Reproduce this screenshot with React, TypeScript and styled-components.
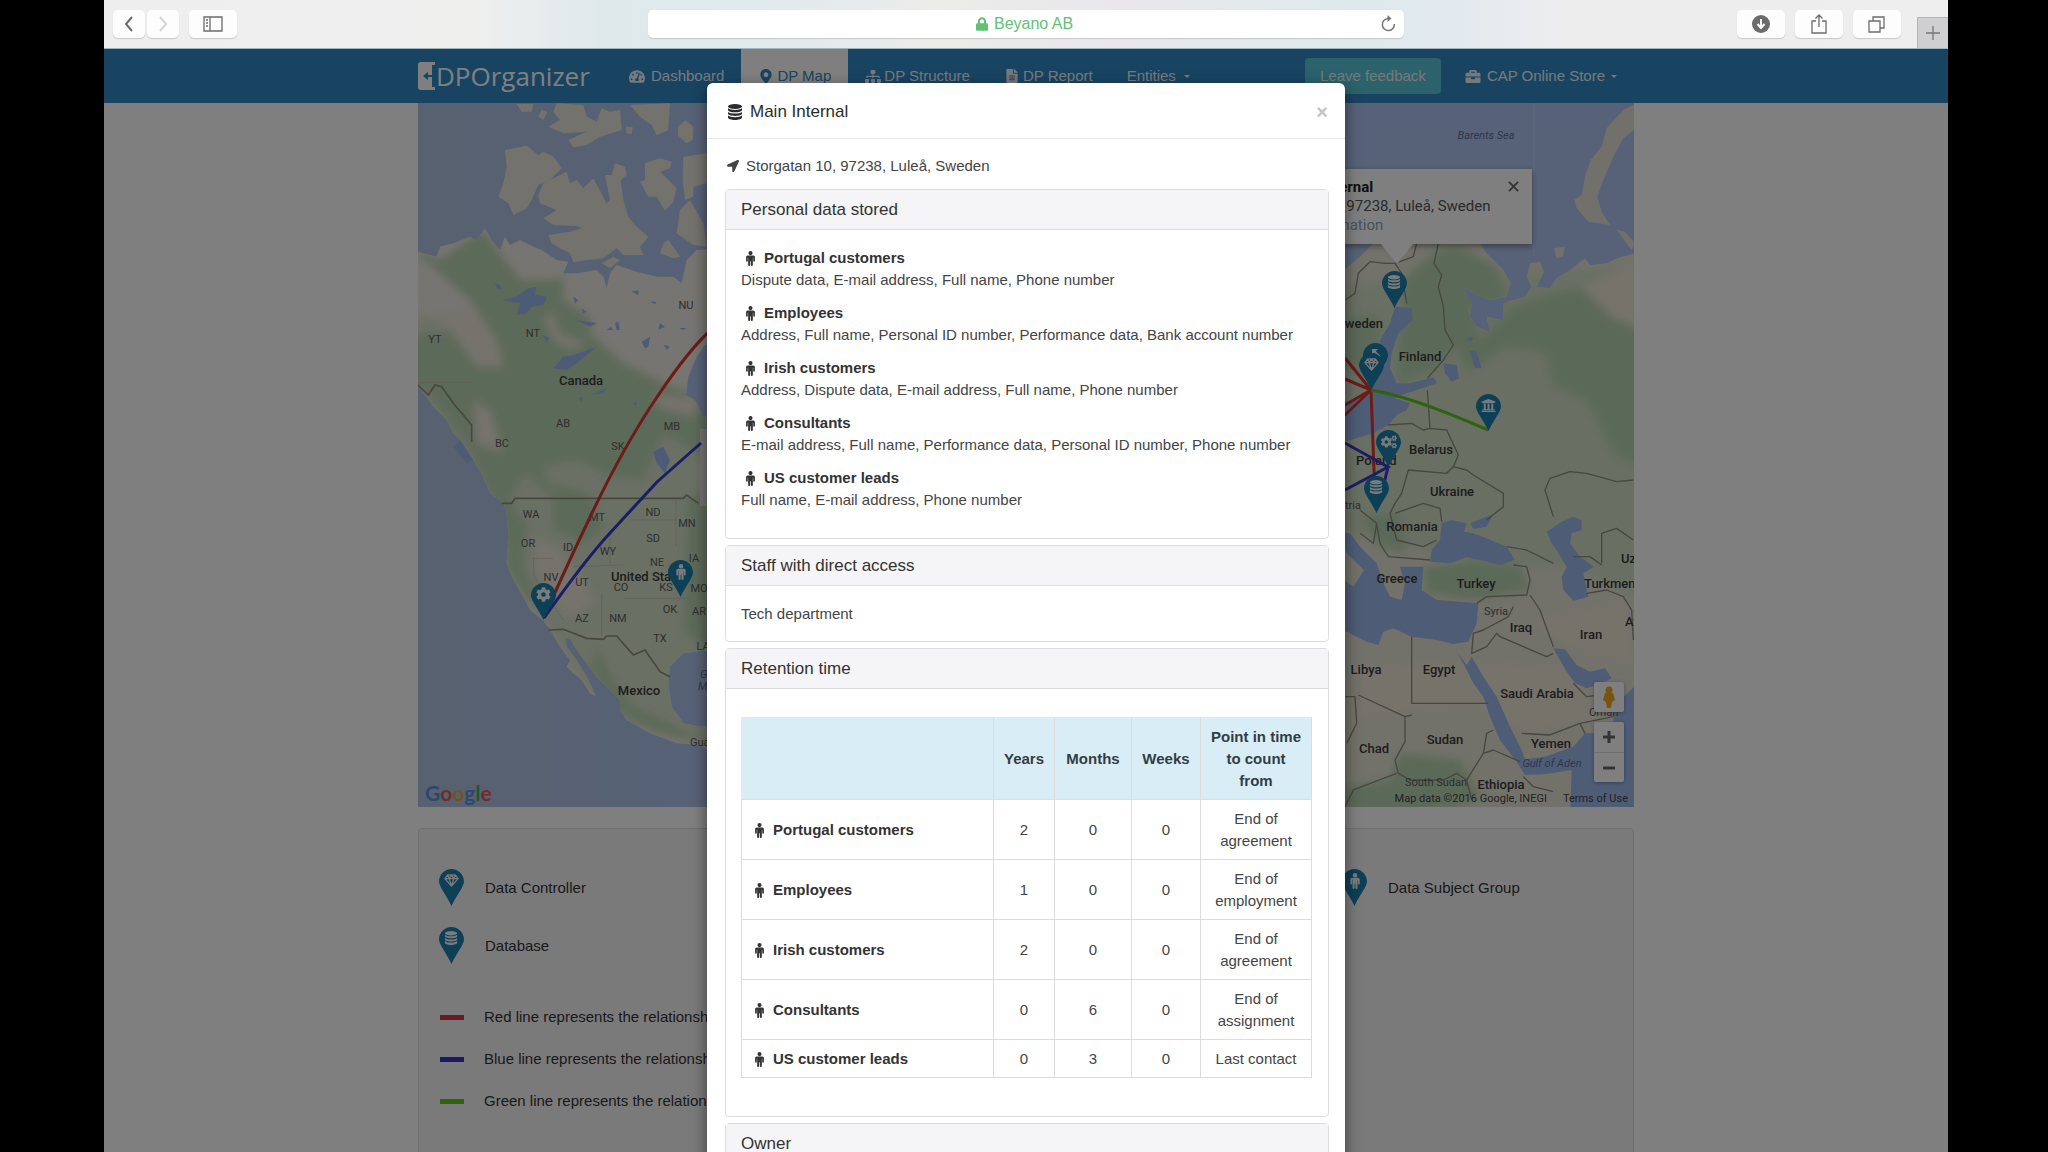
import React from "react";
import styled, { createGlobalStyle } from "styled-components";
import {
  FaBriefcase,
  FaCog,
  FaCogs,
  FaFileAlt,
  FaLocationArrow,
  FaLock,
  FaMapMarkerAlt,
  FaSitemap,
  FaTachometerAlt,
  FaUniversity,
} from "react-icons/fa";

const GlobalStyle = createGlobalStyle`
  * { box-sizing: border-box; }
  body { margin: 0; background: #000; }
  button, input { font: inherit; color: inherit; }
`;

const Screen = styled.div`
  height: 100vh;
  overflow: hidden;
  background: #000;
  padding: 0 100px 0 104px;
  font: 15px/22px "Liberation Sans", Arial, sans-serif;
  color: #444;
`;

const Browser = styled.div`
  position: relative;
  height: 100%;
  display: flex;
  flex-direction: column;
  background: #fff;
`;

/* ---------- browser toolbar ---------- */

const Toolbar = styled.header`
  flex: none;
  height: 49px;
  display: grid;
  grid-template-columns: 1fr 41% 1fr;
  align-items: center;
  border-bottom: 1px solid #9fb6c2;
  background: linear-gradient(90deg, #eee 0%, #efefee 20%, #dfe9ec 27%, #e0e9ee 35%, #ececea 45%, #e9e7ea 56%, #dde9ec 68%, #e4eaf0 74%, #ededee 79%, #eee 100%);
`;

const ToolGroup = styled.div<{ $end?: boolean }>`
  display: flex;
  align-self: stretch;
  align-items: center;
  justify-content: ${(p) => (p.$end ? "flex-end" : "flex-start")};
  gap: ${(p) => (p.$end ? "10px" : "2px")};
  padding-left: 9px;
`;

const ToolButton = styled.button<{ $wide?: boolean; $gap?: boolean; $faded?: boolean }>`
  width: ${(p) => (p.$wide ? 48 : 32)}px;
  height: 28px;
  margin-left: ${(p) => (p.$gap ? 8 : 0)}px;
  padding: 0;
  display: grid;
  place-items: center;
  border: 0;
  border-radius: 5px;
  background: #fdfdfd;
  box-shadow: 0 1px 1px #c8c8c8;
  color: ${(p) => (p.$faded ? "#d4d4d4" : "#6c6c6c")};
`;

const NewTab = styled.button`
  align-self: flex-end;
  width: 31px;
  height: 31px;
  margin-left: 6px;
  padding: 0;
  display: grid;
  place-items: center;
  border: 1px solid #b4b4b6;
  border-width: 1px 0 0 1px;
  background: #cfcfd1;
  color: #777;
`;

const AddressBar = styled.div`
  height: 28px;
  display: grid;
  grid-template-columns: 1fr auto 1fr;
  align-items: center;
  border-radius: 5px;
  background: #fff;
  box-shadow: 0 1px 1px #c8c8c8;
  color: #62c176;
  font-size: 16px;
`;

const Site = styled.label`
  grid-column: 2;
  display: flex;
  align-items: center;
  gap: 6px;
  svg { width: 12px; height: 14px; }
`;

const SiteInput = styled.input`
  width: 82px;
  padding: 0;
  border: 0;
  background: none;
`;

const Reload = styled.button`
  justify-self: end;
  margin-right: 7px;
  padding: 0;
  border: 0;
  background: none;
  color: #777;
  display: flex;
`;

/* ---------- application page ---------- */

const Page = styled.div`
  position: relative;
  flex: 1;
  min-height: 0;
  overflow: hidden;
  background: #fff;
`;

const Container = styled.div`
  width: 100%;
  max-width: 1216px;
  margin: 0 auto;
`;

const NavBar = styled.nav`
  background: #3088c2;
`;

const NavRow = styled(Container)`
  height: 54px;
  display: flex;
  align-items: stretch;
  color: #fff;
`;

const Brand = styled.a`
  width: 194px;
  display: flex;
  align-items: center;
  color: #fff;
  text-decoration: none;
  font: 26px/36px "Open Sans", sans-serif;
`;

const NavItem = styled.a<{ $active?: boolean; $gap?: number }>`
  display: flex;
  align-items: center;
  gap: ${(p) => p.$gap ?? 3}px;
  padding: 0 17px;
  white-space: nowrap;
  text-decoration: none;
  color: ${(p) => (p.$active ? "#3088c2" : "#eef4f8")};
  background: ${(p) => (p.$active ? "#fff" : "transparent")};
  svg { width: 16px; height: 15px; }
`;

const Caret = styled.span`
  border: 3px solid transparent;
  border-top-color: currentColor;
  border-bottom: 0;
`;

const NavEnd = styled.div`
  margin-left: auto;
  display: flex;
  align-items: stretch;
`;

const FeedbackButton = styled.button`
  align-self: center;
  height: 36px;
  margin-right: 7px;
  padding: 0 15px;
  border: 0;
  border-radius: 4px;
  background: #56c4d8;
  color: #e8f4f7;
`;

const MapFrame = styled(Container)`
  position: relative;
  height: 704px;
  overflow: hidden;
  font-family: Roboto, sans-serif;
`;

const MapDrawing = styled.svg`
  display: block;
  width: 100%;
  height: 100%;
`;

const InfoWindow = styled.div`
  position: absolute;
  left: 821px;
  top: 66px;
  width: 293px;
  height: 75px;
  padding: 9px 15px;
  background: #fff;
  box-shadow: 0 2px 6px rgba(0, 0, 0, 0.4);
  font-size: 15px;
  line-height: 19px;
  color: #555;
  &::after {
    content: "";
    position: absolute;
    left: 142px;
    top: 75px;
    border: 16px solid transparent;
    border-top: 20px solid #fff;
    border-bottom: 0;
  }
  a { color: #8aa4bb; text-decoration: none; }
`;

const InfoTitle = styled.strong`
  display: flex;
  align-items: center;
  gap: 15px;
  color: #222;
`;

const InfoClose = styled.button`
  position: absolute;
  right: 13px;
  top: 12px;
  padding: 0;
  border: 0;
  background: none;
  color: #666;
  display: flex;
`;

const MapControls = styled.div`
  position: absolute;
  right: 10px;
  bottom: 25px;
  display: flex;
  flex-direction: column;
  gap: 10px;
`;

const ControlBox = styled.div`
  width: 30px;
  background: #fff;
  border-radius: 2px;
  box-shadow: 0 1px 4px rgba(0, 0, 0, 0.3);
`;

const ControlButton = styled.button`
  width: 30px;
  height: 30px;
  padding: 0;
  display: grid;
  place-items: center;
  border: 0;
  background: none;
  color: #666;
  & + & { border-top: 1px solid #ddd; }
`;

const GoogleMark = styled.div`
  position: absolute;
  left: 7px;
  bottom: 2px;
  font: 21px/24px Lato, sans-serif;
  font-weight: 700;
  span:nth-child(3n + 1) { color: #5b8fe0; }
  span:nth-child(2), span:nth-child(6) { color: #e05a50; }
  span:nth-child(3) { color: #e0a840; }
  span:nth-child(5) { color: #4aa865; }
`;

const Attribution = styled.div`
  position: absolute;
  right: 6px;
  bottom: 0;
  display: flex;
  gap: 16px;
  font-size: 11px;
  line-height: 16px;
  color: #444;
  a { color: #444; text-decoration: none; }
`;

const Legend = styled(Container)`
  margin-top: 21px;
  min-height: 400px;
  padding: 40px 5px;
  border: 1px solid #dcdcdc;
  border-radius: 4px;
  background: #f7f5f7;
`;

const PinGrid = styled.div`
  display: grid;
  grid-template-columns: repeat(4, 1fr);
  row-gap: 20px;
`;

const PinKey = styled.div<{ $column: number }>`
  grid-column: ${(p) => p.$column};
  display: flex;
  align-items: center;
  gap: 20px;
  padding-left: 15px;
  color: #333;
  svg { overflow: visible; }
`;

const LineList = styled.ul`
  list-style: none;
  margin: 41px 0 0;
  padding: 0 0 0 16px;
  display: grid;
  row-gap: 20px;
`;

const LineKey = styled.li<{ $color: string }>`
  display: flex;
  align-items: center;
  gap: 20px;
  color: #333;
  &::before {
    content: "";
    width: 24px;
    height: 5px;
    background: ${(p) => p.$color};
  }
`;

/* ---------- dialog ---------- */

const Backdrop = styled.div`
  position: absolute;
  inset: 49px 0 0;
  background: rgba(0, 0, 0, 0.5);
`;

const Dialog = styled.section`
  position: absolute;
  left: 50%;
  top: 83px;
  width: 638px;
  margin-left: -319px;
  background: #fff;
  border-radius: 6px;
  box-shadow: 0 5px 15px rgba(0, 0, 0, 0.5);
`;

const DialogHeader = styled.header`
  height: 56px;
  display: flex;
  align-items: center;
  padding: 2px 17px 0 20px;
  border-bottom: 1px solid #e5e5e5;
`;

const DialogTitle = styled.h4`
  flex: 1;
  margin: 0;
  display: flex;
  align-items: center;
  gap: 7px;
  font-size: 17px;
  font-weight: 400;
  color: #2b2b2b;
`;

const CloseButton = styled.button`
  padding: 0;
  border: 0;
  background: none;
  font-size: 20px;
  font-weight: 700;
  color: #c4c4c4;
`;

const DialogBody = styled.div`
  padding: 16px 16px 16px 18px;
`;

const Address = styled.p`
  margin: 0 0 12px;
  padding-left: 2px;
  display: flex;
  align-items: center;
  gap: 7px;
`;

const Panel = styled.section`
  margin-bottom: 6px;
  border: 1px solid #ddd;
  border-radius: 4px;
`;

const PanelTitle = styled.h5`
  margin: 0;
  padding: 9px 15px 8px;
  border-bottom: 1px solid #ddd;
  background: #f5f4f6;
  font-size: 17px;
  font-weight: 400;
  color: #333;
`;

const PanelBody = styled.div`
  padding: 17px 15px 16px;
`;

const Group = styled.div`
  margin-bottom: 11px;
`;

const GroupName = styled.strong`
  display: flex;
  align-items: center;
  gap: 6px;
  padding-left: 2px;
  color: #333;
  svg { width: 15px; height: 15px; flex: none; }
`;

const Table = styled.table`
  width: 570px;
  margin: 11px 0 22px;
  border-collapse: collapse;
  table-layout: fixed;
  text-align: center;
  th, td { padding: 8px 8px 7px; border: 1px solid #ddd; }
  thead th, thead td { background: #d9edf7; border-top-color: #d9edf7; color: #333d44; }
  thead td { border-left-color: #d9edf7; }
  tbody th { text-align: left; }
`;

const Col = styled.col<{ $w: number }>`
  width: ${(p) => p.$w}px;
`;

/* ---------- drawings ---------- */

const DatabaseIcon = ({ size = 16 }: { size?: number }) => (
  <svg width={size} height={size} viewBox="0 0 16 16" fill="currentColor" aria-hidden>
    <ellipse cx="8" cy="2.500" rx="7" ry="2.500" />
    <path d="M1 4.300c1.500 1.300 4 1.700 7 1.700s5.500-.4 7-1.700v1.700c0 1.400-3.100 2.300-7 2.300s-7-.9-7-2.300z" />
    <path d="M1 7.900c1.500 1.300 4 1.700 7 1.700s5.500-.4 7-1.700v1.700c0 1.400-3.100 2.300-7 2.300s-7-.9-7-2.300z" />
    <path d="M1 11.500c1.500 1.300 4 1.700 7 1.700s5.500-.4 7-1.700v1.900c0 1.500-3.100 2.500-7 2.500s-7-1-7-2.500z" />
  </svg>
);

const MaleIcon = ({ size = 16 }: { size?: number }) => (
  <svg width={size} height={size} viewBox="0 0 16 16" fill="currentColor" aria-hidden>
    <circle cx="8" cy="2.200" r="2.200" />
    <path d="M5 4.800h6a1.700 1.700 0 0 1 1.700 1.700v4a.9.9 0 0 1-1.800 0V7.200h-.4v7.700a1.050 1.050 0 0 1-2.100 0V10.800h-.8v4.100a1.050 1.050 0 0 1-2.100 0V7.200h-.4v3.300a.9.9 0 0 1-1.800 0v-4A1.700 1.700 0 0 1 5 4.800z" />
  </svg>
);

const DiamondIcon = ({ size = 16 }: { size?: number }) => (
  <svg width={size} height={size} viewBox="0 0 16 16" fill="none" stroke="currentColor" strokeWidth="1.400" strokeLinejoin="round" aria-hidden>
    <path d="M4 2h8l3 4-7 8-7-8zM1 6h14M4 2l1.500 4L8 14l2.500-8L12 2M5.500 6L8 2l2.500 4" />
  </svg>
);

const NorthWestArrow = () => (
  <svg width="15" height="12" viewBox="0 0 15 12" fill="none" stroke="currentColor" strokeWidth="2" aria-hidden>
    <path d="M12 10L6 4" />
    <path d="M4 2h6L4 8z" fill="currentColor" stroke="none" />
  </svg>
);

type PinKind = "gem" | "db" | "male" | "cog" | "cogs" | "bank" | "arrow";

const pinIcons: Record<PinKind, React.ReactNode> = {
  gem: <DiamondIcon size={15} />,
  db: <DatabaseIcon size={14} />,
  male: <MaleIcon size={16} />,
  cog: <FaCog size={15} />,
  cogs: <FaCogs size={16} />,
  bank: <FaUniversity size={15} />,
  arrow: <NorthWestArrow />,
};

const PinShape = ({ kind }: { kind: PinKind }) => (
  <g color="#f2f6f8">
    <path d="M12.500 0C5.600 0 0 5.600 0 12.500c0 5 7 13 12.500 24.500 5.500-11.500 12.500-19.500 12.500-24.500C25 5.600 19.400 0 12.500 0z" fill="#1a7fae" />
    <g transform="translate(5 4)">{pinIcons[kind]}</g>
  </g>
);

const Pin = ({ kind }: { kind: PinKind }) => (
  <svg width="26" height="38" viewBox="0 0 26 38" aria-hidden>
    <PinShape kind={kind} />
  </svg>
);

type Label = [string, number, number, ("s" | "e" | "m")?, ("big" | "sea")?];

const labels: Label[] = [
  ["YT", 435, 343], ["NU", 686, 309], ["NT", 533, 337], ["Canada", 581, 385, "m", "big"],
  ["AB", 563, 427], ["MB", 672, 430], ["BC", 502, 447], ["SK", 618, 450],
  ["WA", 531, 518], ["MT", 597, 521], ["ND", 653, 516], ["MN", 687, 527],
  ["OR", 528, 547], ["ID", 568, 551], ["WY", 608, 555], ["SD", 653, 542],
  ["NE", 657, 566], ["IA", 694, 562], ["NV", 551, 581], ["UT", 582, 586],
  ["CO", 621, 591], ["United States", 611, 581, "s", "big"], ["KS", 666, 591], ["MO", 699, 592],
  ["AZ", 582, 622], ["NM", 618, 622], ["OK", 670, 613], ["AR", 699, 615],
  ["TX", 660, 642], ["LA", 703, 650], ["Mexico", 639, 695, "m", "big"], ["Guatemala", 690, 746, "s"],
  ["Gulf of", 700, 678, "s", "sea"], ["Mexico", 698, 690, "s", "sea"],
  ["Barents Sea", 1486, 139, "m", "sea"], ["Sweden", 1383, 328, "e", "big"], ["Finland", 1420, 361, "m", "big"],
  ["Belarus", 1431, 454, "m", "big"], ["Poland", 1356, 465, "s", "big"], ["Ukraine", 1452, 496, "m", "big"],
  ["Austria", 1361, 509, "e"], ["Romania", 1412, 531, "m", "big"], ["Greece", 1397, 583, "m", "big"],
  ["Turkey", 1476, 588, "m", "big"], ["Syria", 1496, 615], ["Iraq", 1521, 632, "m", "big"],
  ["Iran", 1591, 639, "m", "big"], ["Turkmenistan", 1584, 588, "s", "big"], ["Uzbekistan", 1621, 563, "s", "big"],
  ["Afghanistan", 1625, 626, "s", "big"], ["Libya", 1366, 674, "m", "big"], ["Egypt", 1439, 674, "m", "big"],
  ["Saudi Arabia", 1537, 698, "m", "big"], ["Oman", 1589, 716, "s"], ["Sudan", 1445, 744, "m", "big"],
  ["Chad", 1374, 753, "m", "big"], ["Yemen", 1551, 748, "m", "big"], ["Gulf of Aden", 1552, 767, "m", "sea"],
  ["Ethiopia", 1501, 789, "m", "big"], ["South Sudan", 1436, 786],
];

const anchors = { s: "start", e: "end", m: "middle" } as const;

const MapLabel = styled.text<{ $tone?: "big" | "sea" }>`
  font-family: Roboto, sans-serif;
  font-size: ${(p) => (p.$tone === "big" ? 13 : 11)}px;
  font-weight: ${(p) => (p.$tone === "big" ? 500 : 400)};
  font-style: ${(p) => (p.$tone === "sea" ? "italic" : "normal")};
  fill: ${(p) => (p.$tone === "big" ? "#3a3a3a" : p.$tone === "sea" ? "#5a6f98" : "#5c5c5c")};
`;

const pins: [PinKind, number, number][] = [
  ["cog", 531, 583], ["male", 668, 560], ["db", 1382, 271], ["arrow", 1363, 343],
  ["gem", 1359, 353], ["bank", 1476, 394], ["cogs", 1376, 430], ["db", 1364, 476],
];

const WorldMap = () => (
  <MapDrawing viewBox="418 103 1216 704" preserveAspectRatio="xMidYMid slice" role="img" aria-label="Map of data flows">
    <defs>
      <filter id="soft"><feGaussianBlur stdDeviation="12" /></filter>
      <linearGradient id="sea" x1="0" x2="1" y1="0" y2="0">
        <stop offset="0" stopColor="#afc2e0" />
        <stop offset="0.3" stopColor="#afc4f0" />
      </linearGradient>
      <clipPath id="west"><use href="#westLand" /></clipPath>
      <clipPath id="east"><use href="#eastLand" /></clipPath>
    </defs>
    <rect x="418" y="103" width="1216" height="704" fill="url(#sea)" />
    <g transform="translate(410 100) scale(.33333)">
      <path id="westLand" fill="#eeeae2" d="M24 455L60 465 80 470 90 440 130 430 180 410 200 420 225 385 245 420 270 450 285 410 300 435 330 420 370 440 395 450 440 480 475 485 460 520 500 520 560 510 580 530 590 565 600 520 620 495 680 515 740 530 790 530 815 550 830 480 860 450 1000 440 1000 1650 890 1650 820 1660 780 1700 775 1750 785 1820 820 1870 870 1880 1000 1870 1000 1985 900 1955 870 1935 800 1930 720 1900 650 1860 630 1830 630 1800 600 1770 560 1730 530 1690 500 1650 480 1615 465 1615 470 1640 500 1680 530 1730 545 1760 558 1790 540 1780 515 1740 490 1720 470 1700 480 1680 450 1640 420 1590 400 1562 360 1530 345 1500 310 1440 290 1390 295 1300 290 1240 280 1210 240 1180 220 1130 190 1080 160 1030 130 1000 110 960 90 940 70 920 50 890 24 860z" />
      <g clipPath="url(#west)">
        <g filter="url(#soft)">
          <path fill="#d6e0ca" d="M24 640L300 640 500 700 700 840 900 880 1000 1000 1000 1990 600 1850 280 1400 0 900z" />
          <path fill="#b9d4b2" d="M0 440L90 480 220 390 270 460 330 540 420 540 460 530 460 600 540 650 540 700 640 790 820 880 900 960 900 1080 760 1000 700 1140 600 1130 500 1080 400 1100 430 1200 350 1120 300 1190 340 1300 310 1450 270 1250 180 1050 60 880 0 860 0 700 120 700 200 790 280 800 240 680 180 600z" />
          <path fill="#b9d4b2" d="M430 1150L540 1180 580 1290 520 1330 430 1290z M300 1230L350 1260 340 1400 400 1520 350 1500 290 1400z M830 1200L900 1160 900 1640 820 1600z M560 1640L600 1720 660 1810 800 1880 870 1920 740 1900 620 1830 540 1700z" />
          <path fill="#ece6d8" d="M20 640L190 630 260 720 280 800 200 800 120 680z M190 900L240 930 280 1060 200 1030z M400 650L430 640 450 700 530 730 480 750 430 720z M370 1310L440 1340 560 1500 480 1560 380 1420z M730 880L870 900 850 950 740 920z" />
        </g>
      </g>
      <path fill="#e9e5d8" d="M285 150L350 137 385 165 400 155 430 170 455 205 420 240 385 255 365 300 350 325 310 345 295 310 265 290 280 250 290 200z M400 250L470 215 480 250 500 240 520 265 550 235 580 290 590 312 600 300 585 225 605 225 615 190 645 200 650 225 632 240 640 300 655 350 680 380 715 410 690 440 700 465 640 465 620 445 580 475 530 480 490 487 480 460 450 445 425 430 415 405 480 395 515 385 500 378 430 375 400 355 440 330 390 310 385 285z M440 10L520 15 530 50 560 65 575 25 600 35 630 30 635 90 570 110 530 135 490 142 475 120 530 95 460 100 415 80 450 60 430 35z M660 15L780 10 775 90 740 105 725 75 690 50z M805 80L825 60 850 80 848 120 830 130 803 105z M705 190L750 175 785 185 780 205 750 215 775 240 800 265 790 305 765 332 740 290 715 290 690 245 705 240z M820 170L890 160 890 250 850 260 850 290 825 300 818 240z M810 330L840 300 880 370 890 440 850 435 800 400z M760 430L775 420 810 470 790 475 750 460z M320 12L370 12 365 35 335 35z M395 30L412 35 400 60 385 50z M648 80L668 82 665 102 650 100z M575 490L610 470 630 480 600 505z" />
      <path fill="#9ab6ee" d="M275 600L320 590 355 565 380 560 375 585 412 590 400 615 365 620 350 640 320 645 330 610z M430 805L460 770 490 765 560 740 530 765 500 790 470 810z M545 885L590 865 580 880z M695 725L720 710 715 740 705 745z M730 1055L760 1040 780 1080 765 1120 740 1090z M500 660L560 670 540 680z M395 705L420 715 410 725z M130 1040L150 1020 175 1060 190 1080 170 1090z M255 550L270 555 275 570 260 565z M665 575L685 570 685 585z M720 605L740 605 735 613z M750 670L765 680 745 690z M805 683L830 685 820 690z M760 735L778 738 772 750z M490 590L505 600 495 610z M515 625L530 635 520 640z M590 690L602 680 610 690z M615 670L625 665 630 690 620 690z M670 910L682 905 678 918z M505 895L518 890 515 905z" />
      <path fill="#afc4f0" d="M1000 730L885 735 860 770 835 830 828 885 855 900 880 950 1000 950z" />
      <g fill="none" stroke="#8f8c7e" strokeWidth="5">
        <path d="M24 855L55 885 75 855 95 860 130 910 185 975 185 1025M275 1210L305 1210 315 1195 820 1195 830 1185 865 1210M415 1590L460 1588 530 1615 580 1618 590 1608 620 1608 670 1665 705 1650 750 1715 780 1730" />
        <path strokeWidth="2" stroke="#bdb9aa" d="M370 1375L430 1375M370 1375L372 1430 460 1560M490 1400L640 1395M575 1480L575 1610M640 1495L840 1495M660 1260L800 1260M798 1200L798 1340M600 1300L600 1390M24 848L185 848" />
      </g>
    </g>
    <g transform="translate(1340 100) scale(.33333)">
      <path id="eastLand" fill="#e4e4d4" d="M0 520L60 470 100 430 420 430 440 460 490 510 512 550 500 590 450 600 400 580 365 560 395 610 390 650 410 680 450 697 440 650 490 662 490 610 520 600 555 590 575 560 560 530 570 490 600 485 612 515 590 560 630 565 650 535 690 510 735 475 750 495 800 490 830 475 900 455 900 2200 0 2200z" />
      <g clipPath="url(#east)">
        <g filter="url(#soft)">
          <path fill="#d2dfc6" d="M0 560L900 500 900 1500 700 1400 500 1400 0 1300z" />
          <path fill="#b7d3b0" d="M190 540L290 450 360 440 470 500 500 600 390 620 420 720 520 620 640 580 730 560 820 660 900 690 900 1100 820 1060 740 900 640 860 620 760 500 740 380 820 360 760 340 740 300 800 170 850 180 700z M0 660L110 640 120 720 60 820 0 800z M250 1400L400 1380 540 1400 570 1470 400 1500 260 1480z M60 1250L180 1240 200 1360 120 1340z M180 1960L360 1980 420 2100 0 2200 0 2060 150 2040z" />
          <path fill="#ece6d6" d="M60 1700L400 1680 680 1700 800 1850 560 1900 400 1820 60 1850z M560 1560L860 1500 880 1700 680 1640z M720 560L900 480 900 680 820 650z" />
        </g>
      </g>
      <path fill="#e4e1d6" d="M900 5L850 30 800 85 785 140 752 180 735 230 725 285 703 300 710 325 745 365 810 375 785 335 772 290 790 240 820 170 850 115 900 75z M642 445L675 440 668 470 650 475z M830 390L855 395 885 430 875 450z" />
      <path fill="#9fb9ec" d="M165 620L215 625 218 660 175 700 155 760 150 805 170 850 210 850 280 832 292 850 200 880 165 895 210 910 200 930 170 945 145 975 100 1000 60 1012 0 1030 0 905 60 900 90 870 120 790 120 720 150 670z M310 790L350 795 357 835 335 845 315 820z M390 752L410 755 425 805 405 805z M375 720L400 710 395 725z" />
      <path fill="#9fb9ec" d="M270 1385L275 1350 300 1320 305 1270 335 1260 380 1270 372 1295 400 1300 440 1315 500 1340 525 1380 480 1395 420 1380 380 1372 330 1390z M390 1270L460 1242 440 1280 400 1287z M620 1295L665 1265 700 1250 725 1260 725 1290 695 1300 690 1330 720 1370 762 1400 730 1420 745 1490 700 1502 670 1470 665 1430 680 1400 650 1350 635 1330z M0 1430L40 1460 72 1410 20 1360 0 1300 30 1300 60 1340 110 1390 130 1450 150 1490 185 1500 195 1450 180 1400 250 1400 245 1470 290 1500 360 1505 415 1510 410 1570 385 1625 340 1632 290 1620 215 1610 160 1585 130 1595 115 1635 80 1625 20 1595 0 1590z M350 1655L380 1695 395 1670 430 1730 470 1790 510 1880 545 1950 555 1978 615 1970 700 1940 735 1900 820 1900 820 1840 850 1790 900 1745 900 2160 690 2160 695 2010 620 2022 555 2025 530 1985 480 1920 450 1850 430 1790 400 1750 375 1700z M640 1645L675 1648 710 1695 750 1715 795 1705 815 1735 780 1752 740 1765 705 1750 680 1715z" />
      <g fill="none" stroke="#8f8c7e" strokeWidth="4" strokeLinejoin="round">
        <path d="M295 430L282 490 305 525 295 560 310 620 315 690 340 735 310 780 262 835M15 600L45 580 55 520 90 485 135 490 165 490 220 470 230 430M165 490L185 520 200 610M262 870L270 985 320 990 355 1065 340 1100M145 975L215 970 250 990 270 985M185 1180L205 1110 320 1120 340 1100 380 1110 400 1125 490 1180 490 1220 440 1260M185 1180L165 1210 150 1240 170 1320 250 1340 290 1320M165 1240L250 1210 300 1225 305 1265M110 1270L120 1330 145 1370 270 1380M60 1230L110 1270 100 1330 60 1300" />
        <path d="M640 1250L615 1170 630 1135 690 1115 740 1120 830 1145 880 1140M500 1340L560 1350 640 1390M520 1395L560 1400 570 1440 560 1485 440 1490 410 1510M570 1485L600 1530 640 1640M520 1520L505 1550 430 1590 400 1600 395 1660 440 1640 470 1600 480 1610 620 1670 640 1660M740 1480L800 1470 850 1490 875 1530 880 1620M785 1390L785 1300 830 1285 880 1320M700 1370L750 1370 785 1395M700 1750L740 1790 820 1780M545 1900L630 1905 720 1870 820 1850M720 1870L735 1900" />
        <path d="M215 1610L215 1810 445 1810M215 1845L195 1850 195 1925 165 1980 175 2020 210 2040 310 2040 350 2020 380 2040M55 1785L195 1850M15 1790L45 1790 50 1870 20 1930M15 2120L40 2070 170 2020M380 2040L430 1960 460 1950 540 1985M430 1960L440 1900 460 1890M380 2040L395 2100M550 2030L580 2060 640 2075" />
      </g>
      <path d="M582 10V430M582 430V470" stroke="#c3d5fa" strokeWidth="3" />
    </g>
    {labels.map(([text, x, y, anchor = "m", tone]) => (
      <MapLabel key={`${text}-${x}`} x={x} y={y} textAnchor={anchors[anchor]} $tone={tone}>
        {text}
      </MapLabel>
    ))}
    <rect x="700" y="429" width="12" height="77" fill="#e8e8e8" />
    <g fill="none" strokeWidth="3">
      <path stroke="#d9362e" d="M544 618Q560 580 592 513T657 397 712 329M1345 358L1371 390 1345 379M1345 405L1371 390 1345 415M1371 390L1374 470 1376 500" />
      <path stroke="#3b38d0" d="M544 618Q585 560 610 533T657 482L701 443M1345 443L1388 467 1345 490M1388 467L1380 500" />
      <path stroke="#5fc41e" d="M1371 390Q1410 396 1488 430" />
    </g>
    {pins.map(([kind, x, y]) => (
      <g key={`${x}-${y}`} transform={`translate(${x} ${y})`}>
        <PinShape kind={kind} />
      </g>
    ))}
  </MapDrawing>
);

/* ---------- data ---------- */

const personalData = [
  ["Portugal customers", "Dispute data, E-mail address, Full name, Phone number"],
  ["Employees", "Address, Full name, Personal ID number, Performance data, Bank account number"],
  ["Irish customers", "Address, Dispute data, E-mail address, Full name, Phone number"],
  ["Consultants", "E-mail address, Full name, Performance data, Personal ID number, Phone number"],
  ["US customer leads", "Full name, E-mail address, Phone number"],
];

const retention: [string, number, number, number, string][] = [
  ["Portugal customers", 2, 0, 0, "End of agreement"],
  ["Employees", 1, 0, 0, "End of employment"],
  ["Irish customers", 2, 0, 0, "End of agreement"],
  ["Consultants", 0, 6, 0, "End of assignment"],
  ["US customer leads", 0, 3, 0, "Last contact"],
];

const lineKeys = [
  ["#d8304a", "Red line represents the relationship"],
  ["#3a30c8", "Blue line represents the relationship"],
  ["#62c41a", "Green line represents the relationship"],
];

export default function App() {
  return (
    <Screen>
      <GlobalStyle />
      <Browser>
        <Toolbar>
          <ToolGroup>
            <ToolButton aria-label="Back">
              <svg width="10" height="18" viewBox="0 0 10 18" fill="none" stroke="currentColor" strokeWidth="2"><path d="M8 2L2 9l6 7" /></svg>
            </ToolButton>
            <ToolButton aria-label="Forward" $faded>
              <svg width="10" height="18" viewBox="0 0 10 18" fill="none" stroke="currentColor" strokeWidth="2"><path d="M2 2l6 7-6 7" /></svg>
            </ToolButton>
            <ToolButton aria-label="Show sidebar" $wide $gap>
              <svg width="20" height="16" viewBox="0 0 20 16" fill="none" stroke="currentColor" strokeWidth="1.300"><path d="M1 1h18v14H1zM7 1v14M3 4h2M3 7h2M3 10h2" /></svg>
            </ToolButton>
          </ToolGroup>
          <AddressBar>
            <Site>
              <FaLock />
              <SiteInput aria-label="Address" defaultValue="Beyano AB" />
            </Site>
            <Reload aria-label="Reload">
              <svg width="18" height="18" viewBox="0 0 18 18" fill="none" stroke="currentColor" strokeWidth="1.500"><path d="M9 3.500a6 6 0 1 0 6.300 5.500" /><path d="M8.500 0v7l4-3.500z" fill="currentColor" stroke="none" /></svg>
            </Reload>
          </AddressBar>
          <ToolGroup $end>
            <ToolButton aria-label="Downloads" $wide>
              <svg width="18" height="18" viewBox="0 0 18 18"><circle cx="9" cy="9" r="9" fill="currentColor" /><path d="M9 4v8M5.500 9L9 13l3.500-4" fill="none" stroke="#fff" strokeWidth="2" /></svg>
            </ToolButton>
            <ToolButton aria-label="Share" $wide>
              <svg width="16" height="20" viewBox="0 0 16 20" fill="none" stroke="currentColor" strokeWidth="1.300"><path d="M5 7H1v12h14V7h-4M8 13V1M4.500 4.500L8 1l3.500 3.500" /></svg>
            </ToolButton>
            <ToolButton aria-label="Show tabs" $wide>
              <svg width="18" height="18" viewBox="0 0 18 18" fill="none" stroke="currentColor" strokeWidth="1.300"><path d="M1 6h11v11H1zM5 6V2h11v11h-4" /></svg>
            </ToolButton>
            <NewTab aria-label="New tab">
              <svg width="16" height="16" viewBox="0 0 16 16" stroke="currentColor" strokeWidth="1.300"><path d="M8 1v14M1 8h14" /></svg>
            </NewTab>
          </ToolGroup>
        </Toolbar>

        <Page>
          <NavBar>
            <NavRow>
              <Brand href="#">
                <svg width="18" height="28" viewBox="0 0 18 28" aria-hidden>
                  <path d="M3 0h14v3h-3v22h3v3H3a3 3 0 0 1-3-3V3a3 3 0 0 1 3-3z" fill="#fff" />
                  <path d="M5 14l5-4v3h4v2h-4v3z" fill="#3088c2" />
                </svg>
                DPOrganizer
              </Brand>
              <NavItem href="#" $gap={6}><FaTachometerAlt />Dashboard</NavItem>
              <NavItem href="#" $active><FaMapMarkerAlt />DP Map</NavItem>
              <NavItem href="#"><FaSitemap />DP Structure</NavItem>
              <NavItem href="#"><FaFileAlt />DP Report</NavItem>
              <NavItem href="#" $gap={8}>Entities<Caret /></NavItem>
              <NavEnd>
                <FeedbackButton>Leave feedback</FeedbackButton>
                <NavItem href="#" $gap={6}><FaBriefcase />CAP Online Store<Caret /></NavItem>
              </NavEnd>
            </NavRow>
          </NavBar>

          <MapFrame>
            <WorldMap />
            <InfoWindow>
              <InfoTitle><DatabaseIcon size={15} />Main Internal</InfoTitle>
              Storgatan 10, 97238, Luleå, Sweden
              <br />
              <a href="#">Further information</a>
              <InfoClose aria-label="Close info window">
                <svg width="11" height="11" viewBox="0 0 12 12" stroke="currentColor" strokeWidth="2"><path d="M1 1l10 10M11 1L1 11" /></svg>
              </InfoClose>
            </InfoWindow>
            <GoogleMark aria-label="Google">
              <span>G</span><span>o</span><span>o</span><span>g</span><span>l</span><span>e</span>
            </GoogleMark>
            <MapControls>
              <ControlBox>
                <ControlButton aria-label="Street view">
                  <svg width="14" height="22" viewBox="0 0 14 22" fill="#f0a81c"><circle cx="7" cy="4" r="3.500" /><path d="M3 7h8l2 7-3 2-1 6H5l-1-6-3-2z" /></svg>
                </ControlButton>
              </ControlBox>
              <ControlBox>
                <ControlButton aria-label="Zoom in">
                  <svg width="12" height="12" viewBox="0 0 12 12" stroke="currentColor" strokeWidth="3"><path d="M6 0v12M0 6h12" /></svg>
                </ControlButton>
                <ControlButton aria-label="Zoom out">
                  <svg width="12" height="12" viewBox="0 0 12 12" stroke="currentColor" strokeWidth="3"><path d="M0 6h12" /></svg>
                </ControlButton>
              </ControlBox>
            </MapControls>
            <Attribution>
              <span>Map data ©2016 Google, INEGI</span>
              <a href="#">Terms of Use</a>
            </Attribution>
          </MapFrame>

          <Legend>
            <PinGrid>
              <PinKey $column={1}><Pin kind="gem" />Data Controller</PinKey>
              <PinKey $column={4}><Pin kind="male" />Data Subject Group</PinKey>
              <PinKey $column={1}><Pin kind="db" />Database</PinKey>
            </PinGrid>
            <LineList>
              {lineKeys.map(([color, text]) => (
                <LineKey key={text} $color={color}>{text}</LineKey>
              ))}
            </LineList>
          </Legend>
        </Page>

        <Backdrop />
        <Dialog role="dialog" aria-labelledby="dialog-title">
          <DialogHeader>
            <DialogTitle id="dialog-title"><DatabaseIcon size={16} />Main Internal</DialogTitle>
            <CloseButton aria-label="Close">×</CloseButton>
          </DialogHeader>
          <DialogBody>
            <Address><FaLocationArrow size={12} />Storgatan 10, 97238, Luleå, Sweden</Address>
            <Panel>
              <PanelTitle>Personal data stored</PanelTitle>
              <PanelBody>
                {personalData.map(([name, fields]) => (
                  <Group key={name}>
                    <GroupName><MaleIcon />{name}</GroupName>
                    {fields}
                  </Group>
                ))}
              </PanelBody>
            </Panel>
            <Panel>
              <PanelTitle>Staff with direct access</PanelTitle>
              <PanelBody>Tech department</PanelBody>
            </Panel>
            <Panel>
              <PanelTitle>Retention time</PanelTitle>
              <PanelBody>
                <Table>
                  <colgroup>
                    <Col $w={252} /><Col $w={61} /><Col $w={77} /><Col $w={69} /><Col $w={111} />
                  </colgroup>
                  <thead>
                    <tr>
                      <td />
                      <th scope="col">Years</th>
                      <th scope="col">Months</th>
                      <th scope="col">Weeks</th>
                      <th scope="col">Point in time to count from</th>
                    </tr>
                  </thead>
                  <tbody>
                    {retention.map(([name, years, months, weeks, point]) => (
                      <tr key={name}>
                        <th scope="row"><GroupName><MaleIcon />{name}</GroupName></th>
                        <td>{years}</td>
                        <td>{months}</td>
                        <td>{weeks}</td>
                        <td>{point}</td>
                      </tr>
                    ))}
                  </tbody>
                </Table>
              </PanelBody>
            </Panel>
            <Panel>
              <PanelTitle>Owner</PanelTitle>
              <PanelBody>Tech department</PanelBody>
            </Panel>
          </DialogBody>
        </Dialog>
      </Browser>
    </Screen>
  );
}
